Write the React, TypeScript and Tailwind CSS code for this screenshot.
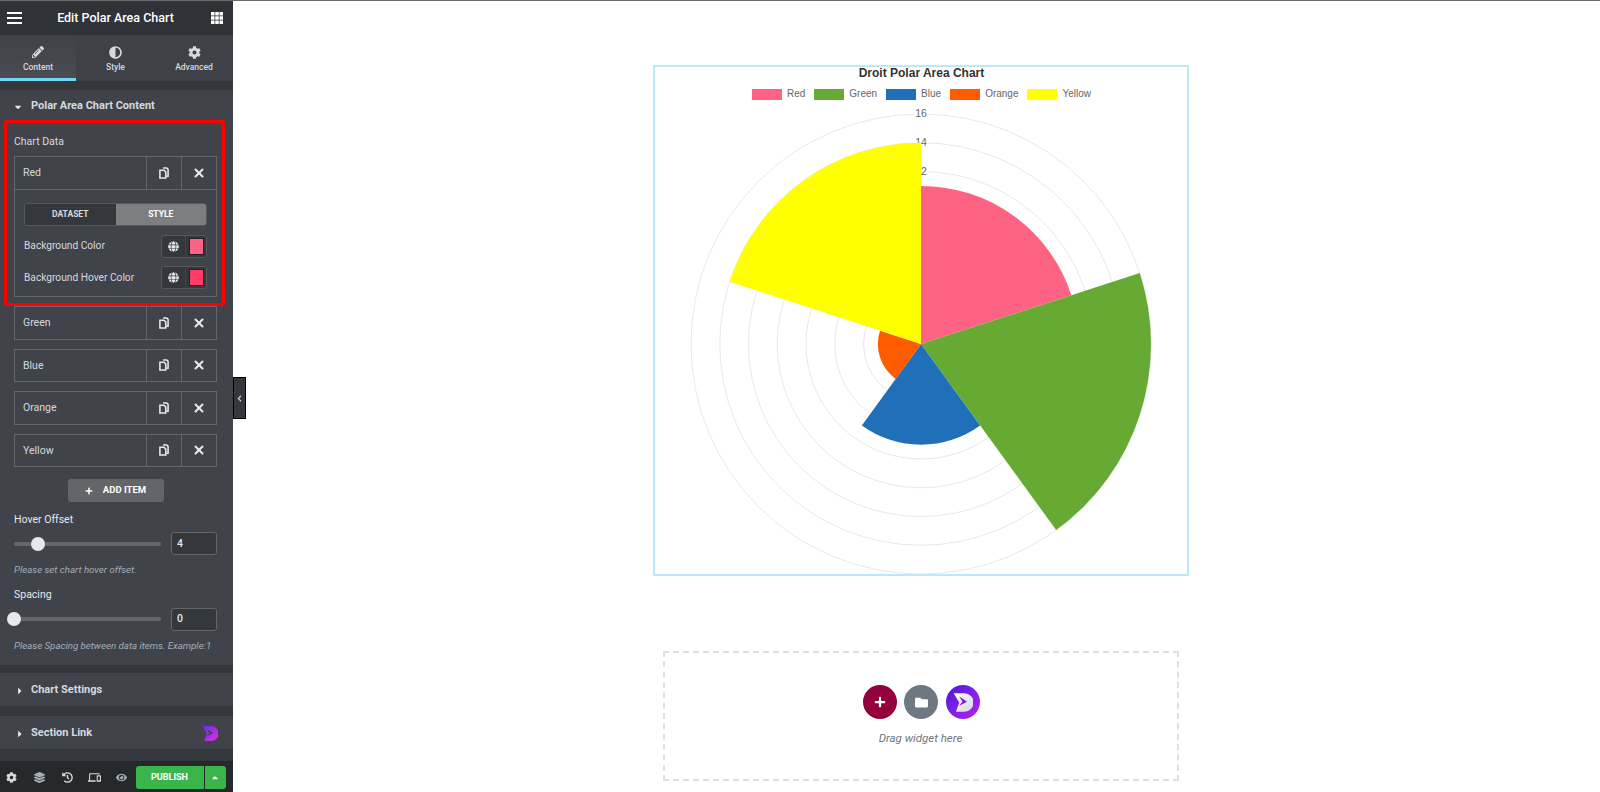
import { useId } from "react";
import { X } from "lucide-react";
import {
  FaAdjust,
  FaCaretDown,
  FaCaretRight,
  FaCaretUp,
  FaChevronLeft,
  FaCog,
  FaEye,
  FaFolder,
  FaGlobe,
  FaHistory,
  FaLayerGroup,
  FaPencilAlt,
  FaPlus,
} from "react-icons/fa";
import { MdDevices } from "react-icons/md";
import { TfiLayoutGrid3Alt } from "react-icons/tfi";

const CX = 231;
const CY = 232;
const UNIT = 14.375;

const slices = [
  { label: "Red", value: 11, color: "#ff6384" },
  { label: "Green", value: 16, color: "#66aa33" },
  { label: "Blue", value: 7, color: "#206fb9" },
  { label: "Orange", value: 3, color: "#ff5c00" },
  { label: "Yellow", value: 14, color: "#ffff00" },
];

function slicePath(index: number, value: number) {
  const r = value * UNIT;
  const a0 = ((index * 72 - 90) * Math.PI) / 180;
  const a1 = (((index + 1) * 72 - 90) * Math.PI) / 180;
  const x0 = CX + r * Math.cos(a0);
  const y0 = CY + r * Math.sin(a0);
  const x1 = CX + r * Math.cos(a1);
  const y1 = CY + r * Math.sin(a1);
  return `M${CX} ${CY}L${x0} ${y0}A${r} ${r} 0 0 1 ${x1} ${y1}Z`;
}

function PolarChart() {
  const rings = [2, 4, 6, 8, 10, 12, 14, 16];
  return (
    <svg viewBox="0 0 462 461" className="mx-auto block h-[461px] w-[462px] overflow-visible">
      {rings.map((n) => (
        <circle key={n} cx={CX} cy={CY} r={n * UNIT} fill="none" stroke="#e8e8e8" strokeWidth="1" />
      ))}
      {[12, 14, 16].map((n) => (
        <g key={n}>
          <rect x={CX - 7} y={CY - n * UNIT - 6} width="14" height="12" fill="#fff" />
          <text
            x={CX}
            y={CY - n * UNIT + 3}
            textAnchor="middle"
            fontSize="10.5"
            fill="#666"
            fontFamily="'Liberation Sans', sans-serif"
          >
            {n}
          </text>
        </g>
      ))}
      {slices.map((s, i) => (
        <path key={s.label} d={slicePath(i, s.value)} fill={s.color} />
      ))}
    </svg>
  );
}

function DroitMark({ size, from, to, notch }: { size: number; from: string; to: string; notch: string }) {
  const id = useId();
  return (
    <svg width={size} height={size} viewBox="20 18 64 64">
      <defs>
        <linearGradient id={id} x1="0" y1="0" x2="1" y2="1">
          <stop offset="0" stopColor={from} />
          <stop offset="1" stopColor={to} />
        </linearGradient>
      </defs>
      <path d="M25 22H58A28 28 0 0 1 58 78H32L42 50Z" fill={`url(#${id})`} />
      <path d="M42 32L66 48L42 60L52 48Z" fill={notch} />
    </svg>
  );
}

function CopyIcon() {
  return (
    <svg viewBox="0 0 11 13" className="h-[12px] w-[10px] text-[#e6e9ec]" fill="none" stroke="currentColor" strokeWidth="1.7">
      <path d="M4.5 1H8.5L10 2.5V10H8" />
      <path d="M1 3.5H5.5L7.5 5.5V12H1Z" />
    </svg>
  );
}

function RepeaterHead({ label }: { label: string }) {
  return (
    <div className="flex h-[31.5px] items-stretch text-[10.5px] text-[#d5dadf]">
      <div className="flex flex-1 items-center pl-[8px] pt-[1px]">{label}</div>
      <div className="flex w-[35px] items-center justify-center border-l border-[#64666a]">
        <CopyIcon />
      </div>
      <div className="flex w-[35px] items-center justify-center border-l border-[#64666a]">
        <X className="h-[14px] w-[14px] text-[#e6e9ec]" strokeWidth={3.5} />
      </div>
    </div>
  );
}

function RepeaterRow({ label }: { label: string }) {
  return (
    <div className="ml-[14px] mt-[9px] w-[203px] border border-[#64666a]">
      <RepeaterHead label={label} />
    </div>
  );
}

function ColorControl({ label, color }: { label: string; color: string }) {
  return (
    <div className="flex h-[23px] items-center justify-between text-[10.2px] text-[#d5dadf]">
      <span>{label}</span>
      <div className="flex h-[23px] w-[46px] overflow-hidden rounded-[3px] border border-[#55585c]">
        <div className="flex w-[23px] items-center justify-center bg-[#34383c] text-[#e6e9ec]">
          <FaGlobe className="h-[11px] w-[11px]" />
        </div>
        <div className="flex flex-1 border-l border-[#404349] bg-[#34383c] py-[2px] pl-[3px] pr-[2px]">
          <div className="flex-1 border border-[#1f2124]" style={{ backgroundColor: color }} />
        </div>
      </div>
    </div>
  );
}

function SliderControl({
  label,
  value,
  thumb,
  help,
}: {
  label: string;
  value: string;
  thumb: string;
  help: string;
}) {
  return (
    <div className="pl-[14px]">
      <div className="h-[16px] text-[10.5px] leading-[16px] text-[#e6e9ec]">{label}</div>
      <div className="mt-[4.5px] flex h-[23px] w-[203px] items-center justify-between">
        <div className="relative h-[4px] w-[147px] rounded-full bg-[#64666a]">
          <div className={`absolute top-[-5px] h-[14px] w-[14px] rounded-full bg-[#e6e9ec] ${thumb}`} />
        </div>
        <div className="flex h-[23px] w-[46px] items-center rounded-[3px] border border-[#64666a] bg-[#34383c] pl-[5px] text-[10.5px] font-medium text-[#e6e9ec]">
          {value}
        </div>
      </div>
      <div className="mt-[8px] h-[14px] text-[9.7px] italic leading-[14px] text-[#a4afb7]">{help}</div>
    </div>
  );
}

function SectionBar({ label, logo }: { label: string; logo?: boolean }) {
  return (
    <div className="flex h-[33px] items-center bg-[#404349] pl-[17px] pr-[15px] pt-[2px] text-[11px] font-bold text-[#d5dadf]">
      <FaCaretRight className="h-[10px] w-[6px] text-[#e6e9ec]" />
      <span className="ml-[8px] flex-1">{label}</span>
      {logo && <DroitMark size={17} from="#6a2be0" to="#e030e8" notch="#404349" />}
    </div>
  );
}

function Sidebar() {
  return (
    <aside className="flex h-[792px] w-[233px] shrink-0 flex-col overflow-hidden bg-[#34383c] font-['Roboto',sans-serif]">
      <header className="flex h-[35px] shrink-0 items-center justify-between border-t border-[#6b6b6b] bg-[#2f3236] pl-[7px] pr-[10px] text-white">
        <div className="flex w-[15px] flex-col gap-[2.5px]">
          <span className="h-[2.5px] bg-white" />
          <span className="h-[2.5px] bg-white" />
          <span className="h-[2.5px] bg-white" />
        </div>
        <span className="mr-[2px] text-[12.5px] font-medium">Edit Polar Area Chart</span>
        <TfiLayoutGrid3Alt className="h-[12px] w-[12px]" />
      </header>

      <nav className="flex h-[46px] shrink-0 bg-[#3e4147] text-[8.5px] font-medium text-[#d5dadf]">
        <div className="flex w-[76px] flex-col items-center border-b-[3px] border-[#71d7f7] bg-gradient-to-b from-[#3e4147] to-[#494c52] pt-[11px]">
          <FaPencilAlt className="h-[12px] w-[12px]" />
          <span className="mt-[3px]">Content</span>
        </div>
        <div className="flex w-[79px] flex-col items-center pt-[11px]">
          <FaAdjust className="h-[13px] w-[13px]" />
          <span className="mt-[2px]">Style</span>
        </div>
        <div className="flex w-[78px] flex-col items-center pt-[11px]">
          <FaCog className="h-[13px] w-[13px]" />
          <span className="mt-[2px]">Advanced</span>
        </div>
      </nav>

      <section className="mt-[9px] h-[575px] shrink-0 bg-[#404349]">
        <div className="flex h-[30px] items-center pl-[14px] pt-[3px] text-[11px] font-bold text-[#d5dadf]">
          <FaCaretDown className="h-[10px] w-[8px] text-[#e6e9ec]" />
          <span className="ml-[9px]">Polar Area Chart Content</span>
        </div>

        <div className="ml-[4px] h-[186px] w-[221px] rounded-[2px] border-[3px] border-[#ff0000] pl-[7px]">
          <div className="h-[33px] pt-[10px] text-[10.5px] leading-[18px] text-[#d5dadf]">Chart Data</div>
          <div className="w-[203px] border border-[#64666a]">
            <RepeaterHead label="Red" />
            <div className="h-[107.5px] border-t border-[#64666a] px-[9px] pt-[13px]">
              <div className="flex h-[23px] overflow-hidden rounded-[3px] border border-[#55585c] text-[8.5px] font-bold">
                <div className="flex flex-1 items-center justify-center bg-[#34383c] text-[#d5dadf]">DATASET</div>
                <div className="flex flex-1 items-center justify-center bg-[#7d7e82] text-white">STYLE</div>
              </div>
              <div className="mt-[9px] flex flex-col gap-[8.5px]">
                <ColorControl label="Background Color" color="#ff6384" />
                <ColorControl label="Background Hover Color" color="#ff3d68" />
              </div>
            </div>
          </div>
        </div>

        <div className="-mt-[9px]">
          <RepeaterRow label="Green" />
          <RepeaterRow label="Blue" />
          <RepeaterRow label="Orange" />
          <RepeaterRow label="Yellow" />
        </div>

        <div className="ml-[67.5px] mt-[12px] flex">
          <button className="flex h-[23px] w-[96px] items-center justify-center gap-[10px] rounded-[3px] bg-[#636569] text-[9.5px] font-bold text-white">
            <FaPlus className="h-[8px] w-[8px]" />
            ADD ITEM
          </button>
        </div>

        <div className="mt-[9.5px]">
          <SliderControl label="Hover Offset" value="4" thumb="left-[17px]" help="Please set chart hover offset." />
        </div>
        <div className="mt-[10px]">
          <SliderControl
            label="Spacing"
            value="0"
            thumb="left-[-7px]"
            help="Please Spacing between data items. Example:1"
          />
        </div>
      </section>

      <div className="mt-[8px]">
        <SectionBar label="Chart Settings" />
      </div>
      <div className="mt-[10px]">
        <SectionBar label="Section Link" logo />
      </div>

      <footer className="mt-[12px] flex h-[31px] shrink-0 items-center bg-[#26292c] pl-[6px] pt-[1px] text-[#a4afb7]">
        <FaCog className="h-[11px] w-[11px] text-[#d5dadf]" />
        <FaLayerGroup className="ml-[17px] h-[11px] w-[11px]" />
        <FaHistory className="ml-[17px] h-[11px] w-[11px] text-[#d5dadf]" />
        <MdDevices className="ml-[15px] h-[13px] w-[13px] text-[#d5dadf]" />
        <FaEye className="ml-[15px] h-[11px] w-[11px]" />
        <div className="ml-[8.5px] flex h-[23px] w-[90px] overflow-hidden rounded-[3px] bg-[#39b54a] text-white">
          <div className="flex w-[68px] items-center justify-center pt-[1px] text-[9px] font-bold">PUBLISH</div>
          <div className="flex flex-1 items-center justify-center border-l border-[#26292c]">
            <FaCaretUp className="h-[9px] w-[8px]" />
          </div>
        </div>
      </footer>
    </aside>
  );
}

export default function App() {
  return (
    <div className="relative flex h-[792px] w-[1600px] overflow-hidden bg-white">
      <Sidebar />
      <main className="flex h-[792px] flex-1 flex-col items-center border-t border-[#6b6b6b] pl-[10px] pt-[64px]">
        <div className="mr-[2px] h-[511px] w-[536px] border-2 border-[#bbe9fa] font-['Liberation_Sans',sans-serif]">
          <div className="-mt-[1px] h-[14px] pl-[2px] text-center text-[12px] font-bold leading-[14px] text-[#333]">
            Droit Polar Area Chart
          </div>
          <div className="mt-[8px] flex h-[12px] justify-center gap-[9px] pl-[2px] text-[10px] leading-[12px] text-[#666]">
            {slices.map((s) => (
              <div key={s.label} className="flex items-center gap-[5px]">
                <span className="h-[11px] w-[30px]" style={{ backgroundColor: s.color }} />
                {s.label}
              </div>
            ))}
          </div>
          <div className="mt-[12px]">
            <PolarChart />
          </div>
        </div>

        <div className="mr-[2px] mt-[75px] flex h-[130px] w-[516px] flex-col items-center border-2 border-dashed border-[#dbe0e4] pt-[32px]">
          <div className="flex gap-[7.5px] pl-[1px]">
            <div className="flex h-[34px] w-[34px] items-center justify-center rounded-full bg-[#93003c] text-white">
              <FaPlus className="h-[12px] w-[12px]" />
            </div>
            <div className="flex h-[34px] w-[34px] items-center justify-center rounded-full bg-[#6d7882] text-white">
              <FaFolder className="h-[13px] w-[13px]" />
            </div>
            <div className="flex h-[34px] w-[34px] items-center justify-center rounded-full bg-gradient-to-br from-[#4a10d8] to-[#b51cf2]">
              <DroitMark size={21} from="#ffffff" to="#d8d2e4" notch="#7a14e4" />
            </div>
          </div>
          <div className="mt-[11px] font-['Roboto',sans-serif] text-[11.5px] italic text-[#6d7882]">
            Drag widget here
          </div>
        </div>
      </main>

      {/* Panel collapse tab */}
      <div className="absolute left-[233px] top-[377px] flex h-[42px] w-[13px] items-center justify-center border border-black bg-[#34383c] text-[#d5dadf]">
        <FaChevronLeft className="h-[7px] w-[7px]" />
      </div>
    </div>
  );
}
